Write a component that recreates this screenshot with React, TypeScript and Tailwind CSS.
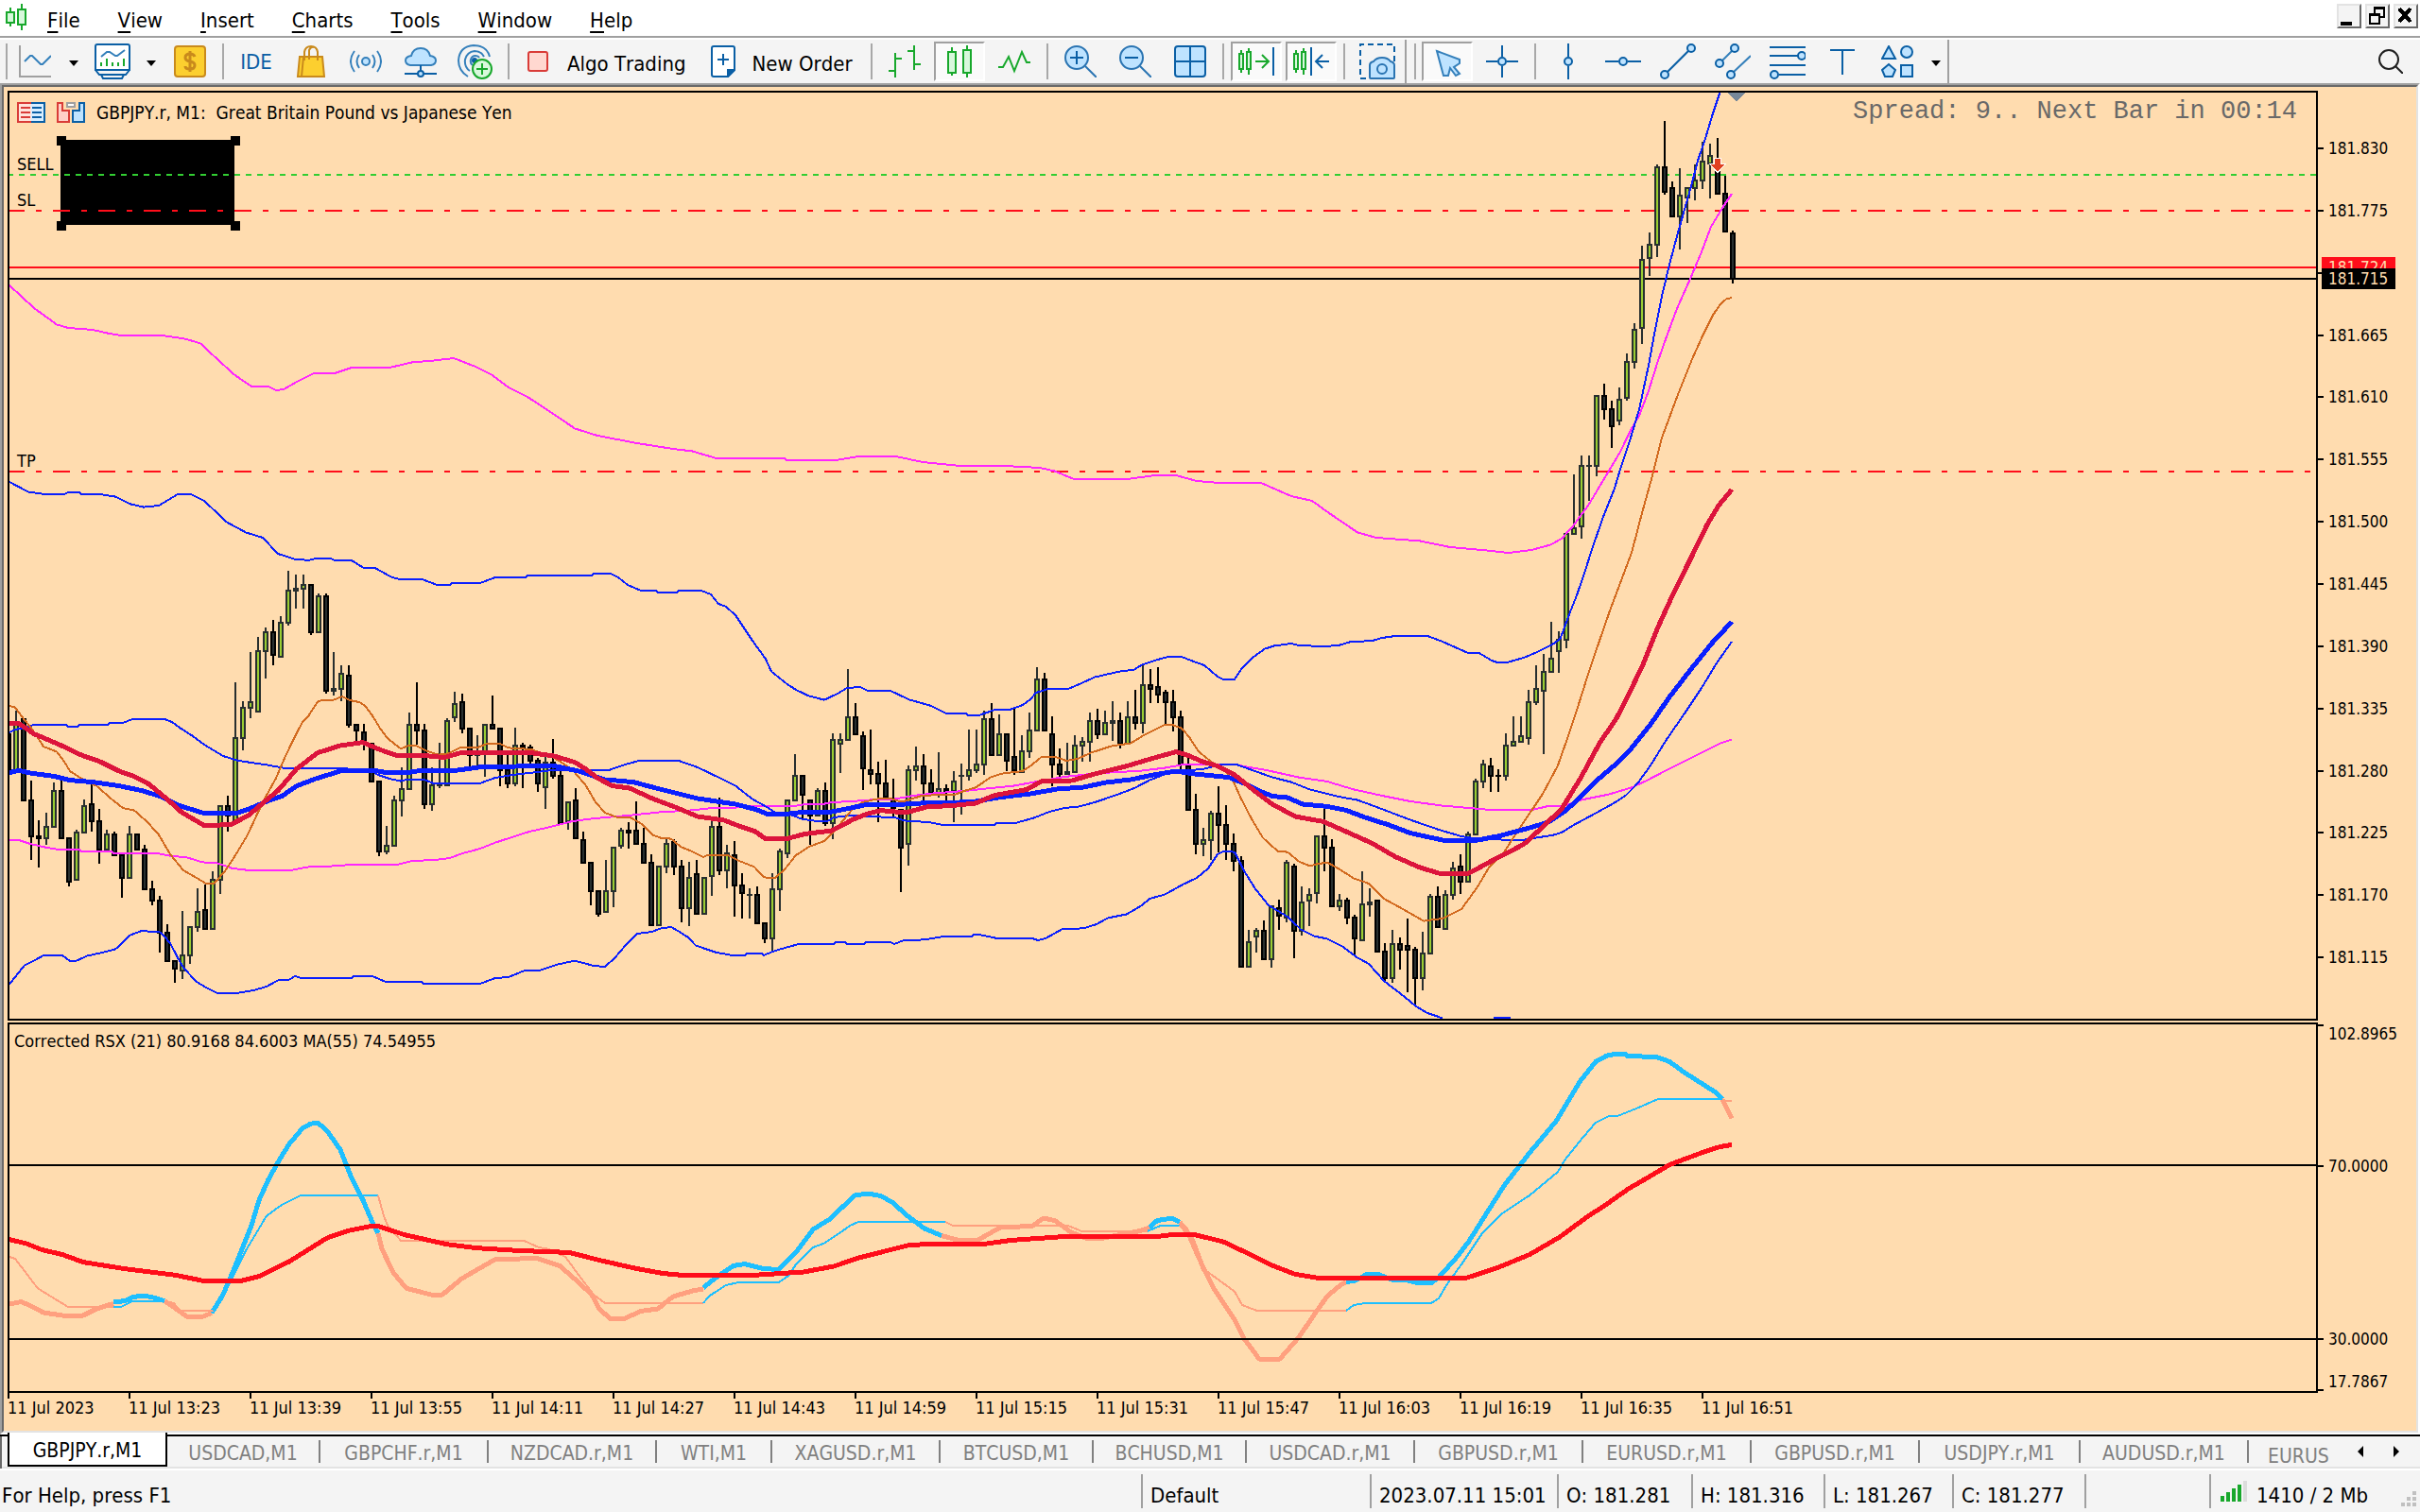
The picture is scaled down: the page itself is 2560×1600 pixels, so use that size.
import type { ReactNode } from 'react';

type Candle = [number, number, number, number, number];

// high, body top, body bottom, low, 1 = bull. Sixths of a row below BASE_ROW.
const BASE_ROW = 280;
const candles: Candle[] = [
  [645, 645, 770, 770, 0], [576, 618, 770, 770, 1], [600, 600, 862, 862, 0], [798, 858, 976, 1050, 0],
  [924, 972, 982, 1074, 0], [900, 942, 983, 1002, 1], [804, 828, 946, 946, 1], [790, 828, 983, 983, 0],
  [978, 978, 1120, 1134, 0], [954, 961, 1115, 1115, 1], [858, 876, 965, 965, 1], [808, 870, 929, 960, 0],
  [888, 924, 1018, 1062, 0], [954, 966, 1018, 1018, 1], [960, 966, 1036, 1036, 0], [1030, 1032, 1108, 1170, 0],
  [942, 966, 1109, 1109, 1], [966, 966, 1018, 1018, 0], [1002, 1014, 1145, 1145, 0], [1116, 1140, 1182, 1194, 0],
  [1164, 1176, 1285, 1344, 0], [1254, 1278, 1373, 1373, 0], [1369, 1369, 1396, 1440, 0], [1212, 1350, 1402, 1428, 1],
  [1260, 1260, 1355, 1380, 1], [1140, 1212, 1266, 1278, 1], [1125, 1206, 1271, 1271, 0], [1086, 1110, 1271, 1271, 1],
  [876, 876, 1114, 1158, 1], [846, 876, 912, 960, 0], [486, 660, 936, 936, 1], [546, 564, 664, 702, 1],
  [390, 546, 570, 600, 1], [342, 384, 580, 580, 1], [312, 324, 388, 474, 1], [288, 324, 402, 432, 0],
  [276, 294, 407, 407, 1], [132, 192, 299, 306, 1], [144, 186, 198, 252, 1], [144, 174, 190, 252, 1],
  [174, 174, 329, 336, 0], [204, 210, 329, 329, 1], [204, 210, 515, 522, 0], [390, 504, 516, 528, 1],
  [432, 456, 509, 546, 1], [432, 462, 624, 630, 0], [618, 618, 641, 672, 0], [618, 642, 682, 702, 0],
  [680, 680, 803, 803, 0], [798, 798, 1025, 1038, 0], [942, 1002, 1025, 1032, 1], [846, 858, 1006, 1006, 1],
  [756, 822, 863, 912, 1], [582, 618, 827, 827, 1], [486, 618, 641, 684, 0], [618, 636, 875, 888, 0],
  [756, 810, 875, 894, 1], [678, 808, 816, 820, 1], [600, 606, 814, 814, 1], [516, 552, 599, 612, 1],
  [522, 546, 635, 648, 0], [630, 630, 719, 756, 0], [654, 706, 719, 750, 1], [618, 618, 707, 786, 1],
  [528, 618, 635, 635, 0], [630, 630, 767, 816, 0], [708, 762, 809, 822, 0], [630, 684, 811, 816, 1],
  [678, 684, 698, 822, 0], [684, 690, 737, 744, 0], [726, 732, 809, 834, 0], [720, 738, 821, 888, 1],
  [666, 738, 785, 792, 0], [765, 780, 936, 936, 0], [864, 864, 932, 954, 1], [822, 858, 983, 983, 0],
  [960, 984, 1061, 1061, 0], [1056, 1056, 1151, 1194, 0], [1146, 1146, 1222, 1230, 0], [1050, 1146, 1217, 1217, 1],
  [1008, 1008, 1151, 1200, 1], [948, 954, 1006, 1014, 1], [930, 954, 965, 1014, 0], [864, 954, 1000, 1000, 0],
  [948, 996, 1061, 1061, 0], [1032, 1056, 1259, 1259, 0], [1068, 1068, 1259, 1259, 1], [984, 996, 1073, 1092, 1],
  [984, 990, 1073, 1098, 0], [1050, 1068, 1205, 1248, 0], [1056, 1104, 1205, 1260, 1], [1050, 1092, 1222, 1222, 0],
  [1104, 1104, 1222, 1222, 1], [920, 942, 1103, 1164, 1], [852, 942, 1085, 1098, 0], [1002, 1026, 1085, 1140, 1],
  [990, 1032, 1133, 1230, 0], [1092, 1128, 1157, 1236, 0], [1140, 1158, 1164, 1236, 1], [1134, 1158, 1253, 1253, 0],
  [1248, 1248, 1301, 1314, 0], [1092, 1140, 1300, 1338, 1], [1014, 1020, 1145, 1212, 1], [858, 858, 1031, 1044, 1],
  [714, 780, 863, 863, 1], [780, 780, 845, 918, 0], [858, 858, 910, 1002, 0], [822, 828, 910, 910, 1],
  [804, 828, 935, 942, 0], [648, 666, 935, 984, 1], [648, 666, 683, 774, 1], [444, 594, 671, 671, 1],
  [552, 594, 653, 653, 0], [642, 654, 761, 828, 0], [636, 762, 779, 810, 0], [738, 774, 809, 930, 0],
  [732, 804, 851, 851, 0], [792, 850, 886, 910, 0], [888, 888, 1013, 1152, 0], [750, 762, 1000, 1068, 1],
  [690, 750, 767, 798, 1], [714, 750, 809, 870, 0], [762, 804, 840, 840, 0], [708, 822, 838, 852, 1],
  [810, 822, 836, 870, 0], [768, 798, 833, 930, 1], [744, 780, 786, 906, 1], [636, 762, 785, 798, 1],
  [636, 744, 767, 774, 1], [576, 600, 749, 780, 1], [552, 600, 719, 719, 0], [588, 648, 719, 719, 1],
  [648, 648, 737, 768, 0], [570, 720, 767, 780, 0], [654, 702, 773, 773, 1], [582, 636, 707, 726, 1],
  [438, 474, 641, 641, 1], [456, 474, 641, 641, 0], [594, 648, 749, 816, 0], [696, 744, 779, 792, 0],
  [678, 768, 779, 780, 1], [654, 684, 773, 773, 1], [660, 672, 689, 738, 1], [582, 606, 677, 738, 1],
  [570, 606, 653, 666, 0], [576, 612, 653, 653, 1], [546, 606, 617, 672, 1], [582, 606, 683, 696, 0],
  [546, 594, 683, 683, 1], [510, 594, 617, 636, 0], [432, 492, 617, 648, 1], [444, 492, 509, 552, 0],
  [438, 498, 527, 552, 0], [510, 516, 551, 618, 0], [510, 546, 599, 642, 0], [576, 594, 750, 762, 0],
  [726, 750, 893, 893, 0], [840, 888, 1001, 1032, 0], [948, 984, 1001, 1038, 1], [894, 900, 989, 1050, 1],
  [816, 900, 941, 1026, 0], [876, 936, 1001, 1050, 0], [966, 996, 1055, 1086, 0], [1038, 1050, 1391, 1391, 0],
  [1272, 1308, 1391, 1391, 1], [1266, 1272, 1295, 1344, 1], [1242, 1272, 1367, 1367, 0], [1194, 1194, 1367, 1392, 1],
  [1176, 1200, 1229, 1272, 0], [1050, 1056, 1235, 1248, 1], [1062, 1068, 1277, 1362, 0], [1134, 1182, 1277, 1290, 1],
  [1140, 1158, 1181, 1260, 1], [972, 972, 1157, 1188, 1], [888, 972, 1013, 1086, 0], [984, 1008, 1199, 1199, 0],
  [1158, 1176, 1199, 1212, 1], [1170, 1176, 1235, 1254, 0], [1224, 1230, 1301, 1356, 0], [1086, 1188, 1307, 1307, 1],
  [1140, 1182, 1194, 1230, 1], [1176, 1176, 1343, 1343, 0], [1314, 1338, 1427, 1434, 0], [1272, 1314, 1427, 1440, 1],
  [1296, 1314, 1337, 1398, 0], [1236, 1320, 1337, 1470, 0], [1326, 1332, 1427, 1512, 0], [1278, 1344, 1427, 1464, 1],
  [1158, 1164, 1349, 1349, 1], [1134, 1164, 1265, 1265, 0], [1146, 1158, 1271, 1271, 1], [1056, 1074, 1163, 1176, 1],
  [1032, 1068, 1121, 1158, 0], [960, 966, 1121, 1121, 1], [792, 798, 971, 971, 1], [732, 744, 803, 822, 1],
  [726, 750, 785, 834, 0], [762, 780, 786, 834, 0], [648, 684, 785, 798, 1], [594, 672, 689, 689, 1],
  [594, 654, 677, 677, 1], [510, 546, 665, 684, 1], [432, 504, 551, 558, 1], [396, 450, 515, 714, 1],
  [294, 408, 455, 455, 1], [324, 348, 389, 456, 1], [12, 12, 353, 378, 1], [-174, -6, 17, 17, 1],
  [-234, -204, -7, 30, 1], [-234, -204, -198, -90, 1], [-426, -426, -199, -168, 1], [-462, -426, -379, -348, 0],
  [-408, -384, -325, -258, 0], [-450, -414, -343, -330, 1], [-558, -534, -415, -408, 1], [-654, -636, -529, -510, 1],
  [-900, -858, -637, -588, 1], [-942, -906, -859, -804, 1], [-1158, -1152, -901, -864, 1], [-1296, -1152, -1069, -1062, 0],
  [-1104, -1086, -991, -990, 0], [-1146, -1062, -991, -888, 1], [-1086, -1086, -1051, -972, 1], [-1158, -1110, -1081, -1044, 1],
  [-1230, -1170, -1105, -1080, 1], [-1224, -1188, -1159, -1050, 1], [-1242, -1160, -1063, -1063, 0], [-1122, -1068, -943, -943, 0],
  [-948, -942, -795, -780, 0],
];

const row = (v: number) => BASE_ROW + Math.round(v / 6);

const magentaUpper =
  '5,151 18,163 30,171.7 36,173.5 49,174.5 57,176.3 64,177.5 86,177.5 98,179.3 106,181.7 114,189.2 124,198.3 133,204.5 142,204.5 146,206.5 150,206 157,202 166,197.5 177,197.5 186,194.5 206,194.5 218,191.7 230,190.7 240,189.5 252,194.2 260,198.3 269,205 279,210 293,219.2 304,226.7 316,230.5 337,234.5 356,237.5 366,238.7 379,242.5 415,242.5 416,243.5 442,243.5 454,241.5 474,241.5 488,244.5 508,246.5 531,246.5 550,247.5 558,249.3 568,253.5 596,253.5 611,251.5 622,251.5 633,254.5 645,255.5 667,255.5 683,262.5 694,265 702,270.8 718,281.7 728,284.5 751,286.2 767,289.5 786,291.2 798,292.5 810,291 820,288.3 826,285 832,278.3 840,267.5 850,250.8 857,239 863,226.7 867,220 872,206.7 877,190.8 882,176.7 887,163.3 894,147.5 900,133.3 905,120 911,110 916,102.5';
const magentaLower =
  '5,444.5 10,444.5 16,446.5 24,448.3 31,449.5 42,449.5 43,450.5 59,450.5 60,451.5 83,451.5 90,452.8 99,453.7 107,456.2 115,456.7 123,459.5 132,460.5 154,460.5 162,458.8 182,458 183,457.5 210,457.5 218,455.5 230,455 238,454 244,451.7 254,449 262,445.8 280,440 290,437.8 302,434.7 310,433.5 318,432.7 332,431.5 351,429.5 363,429 375,427.7 389,427.3 396,426.5 420,426.5 426,425.5 436,425.3 440,424.5 450,424 461,423.2 473,422.8 483,421 494,419.7 510,418.5 524,417 536,415.8 547,413.8 563,411 575,409.7 590,408.5 602,408 616,406.3 626,404.5 654,404.5 659,405.7 669,407.3 687,411.3 702,413.5 716,417.7 732,421.2 746,424 763,426.3 777,427.5 787,428.4 811,428.4 818,426.7 828,426.2 836,423.3 851,420.3 863,416.7 871,413 883,406.7 897,399.7 910,393.3 916,391.3';
const bandUpper =
  '5,255 15,260.3 24,261.5 34,261.5 36,260.5 42,260.5 43,261.5 53,261.5 61,262.8 69,266.7 76,268.3 84,267.5 94,261.5 101,261.5 108,265 120,276.3 130,281.7 139,284.5 147,293 157,296.2 164,296.3 167,295.5 175,295.5 177,296.5 186,296.5 192,300.3 198,300.3 207,305.3 211,306.4 223,306.4 231,309.4 238,309.4 239,308.5 254,308.5 262,305.5 278,305.5 279,304.5 313,304.5 314,303.5 323,303.5 327,305.5 332,309.5 339,312.5 347,312.5 348,313.5 358,313.5 359,312.5 371,312.5 376,314.5 380,319.5 384,321 389,325.5 398,339 405,348.7 408,355.3 416,361.7 421,365 428,368.3 436,370.3 443,367 448,364 455,363.5 459,365.5 471,365.5 481,370.2 492,373.3 500,377.3 511,377.3 512,378.4 518,378.4 524,376.3 526,375.5 534,375.5 541,373 545,370 548,366.5 553,365 554,364.5 565,364.5 572,361.5 579,358.3 592,355.3 600,354.3 604,351.7 614,348.5 618,347.5 625,347.5 630,349.5 637,352 644,358 647,359.5 653,359.5 657,353.3 662,348.3 669,343.3 674,341.7 683,340.5 687,341.5 700,342 708,341.5 714,339.7 726,339 731,337.5 738,336.5 755,336.5 763,339.5 776,345.3 782,345.3 789,349.5 792,350.5 797,350.5 806,348 813,345 821,341 825,338.3 827,333.3 830,325 834,315 838,303.3 842,290.8 848,273.3 854,258.3 857,248.3 862,233.3 867,216.7 872,193.3 875,176.7 879,156.7 883,140 887,125 891,110.8 895,96.7 898,85 902,73.3 906,60 910,48';
const bandMiddle =
  '5,387.5 8,386 13,385 18,383.5 35,383.5 36,384.5 41,384.5 42,383.5 57,383.5 58,382.5 65,382.5 70,380.5 87,380.5 91,382 95,385 102,389.5 108,394 118,400 126,402.5 133,403.5 141,404.7 151,406.5 180,406.5 196,407.5 200,410 206,412 212,413.3 215,412.5 225,412.7 229,414.4 254,414.4 262,411.5 271,410 284,408.5 292,407.5 322,407.5 330,404.7 338,402.5 359,402.5 369,406 379,410.8 389,415.8 398,422.8 405,426.7 410,429.8 419,431.3 424,433.3 432,434.5 438,434.3 441,432.5 449,431.5 459,432 473,432.5 479,434.3 491,435 499,436.5 526,436.5 527,435.5 537,435.5 547,432.7 555,429.5 563,427.5 571,426.7 579,424.5 590,420.8 600,417 608,412.8 616,409.7 622,408 636,407 646,404.5 654,404.5 661,407 673,411.3 683,413.8 693,417.8 708,421.5 718,423.3 726,426.2 736,430 746,433.8 761,439 773,442.5 783,444 805,444.5 814,443 821,442 826,440.5 832,436.7 843,430.8 853,425.3 860,420.8 866,414.7 873,405 881,392 891,377.5 900,364 908,350.8 916,339.5';
const bandLower =
  '5,520.7 9,515.7 13,510.7 18,508.3 23,505.5 33,505.5 37,508.5 40,508.5 46,505.8 54,504 61,502.2 65,498.7 69,494.7 75,492.5 85,493.3 90,499 94,506.7 97,512 104,519.5 109,522.5 115,525.5 125,525.5 134,524 141,522 147,518.7 153,518.3 156,516.5 159,517.4 186,517.4 187,516.5 197,516.5 204,519.5 223,519.5 224,520.5 254,520.5 262,517.5 269,517 277,513.7 286,513.3 295,510.3 304,508.3 314,511 320,511.5 325,507 331,500 337,494 345,493 349,491.3 355,490.5 359,492.8 364,496 368,500.3 379,504 387,505.4 394,505.4 395,504.5 403,504.5 404,505.4 410,503 422,499.6 441,499.5 442,498.5 447,498.5 448,499.5 457,499.5 458,498.5 471,498.5 473,499.5 478,497.5 489,497.2 499,495.5 514,495.5 515,494.5 518,494.5 527,496.4 546,496.5 549,497.5 553,496.5 562,491.5 573,491.2 580,489 586,485.7 596,483.7 604,479 608,475.5 616,473.3 626,467.8 633,464.5 639,459.5 644,452 647,450.5 653,450.8 658,460.8 664,470.3 671,479 681,485 688,491.7 695,495.3 702,496.7 710,500.8 718,506.7 724,510 732,519 742,526.7 749,532.5 755,536 763,538.7';
const fastMa =
  '5,373.5 8,374.3 12,379.7 17,385.8 23,395 30,397.7 34,403 37,408 44,412.5 51,415.8 59,422.8 65,427.5 71,428.8 78,435 84,441.7 90,452 97,460.5 104,464.5 109,467.5 113,467.5 119,461 124,453.3 131,441.7 136,430.8 141,420.8 146,411.7 151,400 156,389.7 160,382 163,379 168,371.3 170,370.5 176,370.5 181,368.5 185,370.5 190,371.5 193,373.3 197,378.7 201,385.3 205,390.7 212,396.2 216,394.5 220,394.5 226,397.5 232,399.3 237,398.7 243,395.7 253,395.4 257,393.7 265,393.7 269,395.7 281,396.5 288,399 293,401 298,404 304,408.7 310,415.8 315,424.5 320,430 326,432.3 333,432.3 340,436.3 345,441.7 350,443.5 355,443.8 360,448 366,450.5 372,453.5 374,452.5 385,452.5 391,455.5 399,458.7 404,464.2 410,464.5 415,460 421,452.5 428,448 436,445 441,440 446,434 451,428 456,424.5 465,422.5 471,422.5 477,424.3 487,421.2 497,420.4 505,420.4 510,418.5 516,416.7 524,411.3 530,409.3 541,408 546,404.5 551,400.4 558,400.4 564,402.5 570,401.5 577,398.3 588,394.7 598,393.3 605,389 616,383.5 620,383.5 625,385.3 629,390 634,397.7 641,403.3 646,405.8 652,412.5 656,421.7 662,433.3 668,443.3 676,450.5 681,450.8 687,455.8 693,458.3 696,457.3 702,456.3 707,459 716,464.7 724,467.5 732,475.5 742,481 753,487.3 763,486 773,481 781,470 788,458.3 795,451.7 802,440.8 810,429 816,420 824,405 829,390.8 834,375.8 840,356.7 846,339 852,321.7 858,305.8 863,292.5 868,273.3 874,251.7 879,231.7 887,210 895,190 901,176.7 906,166.7 910,161 913,158.3 916,157.5';
const slowMa =
  '5,408.8 10,407.7 16,409 29,410.8 37,412.8 49,413.8 63,415.8 75,418.3 86,421.7 94,426 107,430 126,430 133,427.5 141,424 149,421.3 157,415.8 167,412 180,408 197,407.5 204,408.7 216,408.7 222,407.8 240,407.8 253,406 273,405.5 292,405 306,408 320,412.5 335,413.8 347,417 369,422.5 389,425.5 400,428.3 406,430.8 415,430.8 422,430 439,429.7 451,427.3 458,425.8 479,425.5 487,425 504,424.7 516,424 530,421.7 545,420 559,417.5 573,416.5 585,414 598,412.5 610,410 622,408 632,409.5 650,411.3 657,414 667,418.8 673,421.3 681,422 689,425.5 702,426.7 712,428.7 722,432.5 734,436.3 746,440.8 763,444.5 779,445 793,442.3 808,438.3 819,435 828,429 836,421.7 846,411.7 855,404 863,395.8 873,383.3 883,368.8 895,353.3 906,339.7 916,329';
const midMa =
  '5,382.8 10,382.8 18,388.3 31,393.8 43,399.5 53,403 63,408 71,410.8 79,415 88,422.5 96,429.7 108,436.8 122,436.3 131,431.7 139,425 147,418.3 157,406.7 168,398.3 180,394.5 192,392.8 200,396.3 210,399.8 224,399.7 235,400.8 244,398.2 280,398.2 293,400 304,403.3 310,407 316,411.7 324,415.8 333,417 345,422.5 357,427 369,432 383,434 390,436.7 399,439.7 405,443.8 416,443.8 426,441.2 440,439.5 451,433.7 459,430.5 466,428.8 479,430 490,427 504,426.2 516,425 526,420.8 543,417.8 551,413.3 567,413 579,409.5 596,405.3 608,401.7 622,397.8 628,399.5 636,403 644,405.3 653,410 663,418 673,425.5 685,432 700,434.7 712,440 726,446.3 738,453.3 751,459 761,462 777,462 789,455.5 806,446.7 816,437.5 826,428 836,411.7 846,393.3 855,380 861,368.3 869,351.7 877,331.7 885,314.2 895,294 903,277.5 909,267.5 916,259';

const UP = '#1ebfff';
const DOWN = '#ffa07f';

const rsx: [string, string][] = [
  [DOWN, '5,690 11,688.8 16,690.8 23,694.5 33,696 44,696 51,692.5 60,689.7'],
  [UP, '60,689 66,688.3 70,686.3 76,685.5 82,686.7 87,688.3'],
  [DOWN, '87,688.3 92,691.7 99,696.7 107,696.7 112,694.7'],
  [UP, '112,694.7 118,685 123,673.3 129,658.3 133,648.3 137,635 142,624 148,613.3 153,605.3 160,597 164,594.7 168,594 173,598.3 180,608.3 186,623.3 192,635 197,646.7 200,652.5'],
  [DOWN, '200,652.5 202,660.8 208,673.3 215,681.7 228,685 234,685 244,676.7 252,672 262,666.3 284,665.8 296,669.7 304,676.7 313,685 317,692.5 323,698 330,697.8 339,693.7 348,692.5 356,686 367,682.8 372,682'],
  [UP, '372,681.3 380,675 388,669.7 394,668.8 404,671.3 412,671.7 421,662.5 430,650.5 439,645 452,632.5 459,631.5 466,632.8 472,636.2 480,643.3 489,650 498,653.8'],
  [DOWN, '498,653.8 507,656.2 517,656.2 529,649.5 546,648.7 552,644.5 558,645.8 566,651.7 574,655 584,655 592,653.3 603,651.3 608,649.5'],
  [UP, '608,649.5 612,645.8 620,644.5 624,646.7'],
  [DOWN, '624,646.7 627,650 631,656.7 636,670 642,681.7 653,698.3 658,708.3 666,719 677,719 687,707.5 695,695.8 702,685.8 709,680 712,678.3'],
  [UP, '712,678.3 717,677.5 723,674.2 729,674.2 736,677 744,677.3 750,678.8 757,678.8 761,675.8 770,665.8 777,656.7 787,640.8 796,626.7 809,610 823,593.3 836,571.7 844,561.7 850,558.5 854,557.8 860,557.8 861,558.8 876,559.2 883,561.7 891,567.5 902,574.5 908,578.3 911,581.7'],
  [DOWN, '911,581.7 916,591.7'],
];

const rsxSignal: [string, string][] = [
  [DOWN, '5,665 8,666 20,681.7 36,691.5 60,691.5'],
  [UP, '60,691.5 64,691.5 66,690.5 70,688.4 87,688.4'],
  [DOWN, '87,688.4 92,689.5 95,693.4 113,693.4'],
  [UP, '113,693.4 116,688 123,675.8 130,661.7 137,650 141,643.3 149,637.5 159,632.5 200,632.5'],
  [DOWN, '200,632.5 203,643.3 205,648.3 212,656.4 277,656.4 285,660 290,660.8 299,665 307,675.8 314,685 320,689.5 372,689.5'],
  [UP, '372,689.5 375,685.8 384,680 391,678.4 412,678.4 417,675 421,669 430,660 436,657.8 450,648.3 454,646.5 500,646.5'],
  [DOWN, '500,646.5 504,648.5 565,648.5 572,651.4 607,651.4'],
  [UP, '607,651.4 614,648.4 624,648.4'],
  [DOWN, '624,648.4 628,653.3 633,665 637,671.7 653,683.3 657,690.5 665,693.5 712,693.5'],
  [UP, '712,693.5 716,690.5 722,689.5 757,689.5 761,687 765,680 773,669 784,652.5 795,641.7 809,632.5 824,620 828,613.3 836,603.3 844,594 851,590.5 856,590.3 866,586.3 877,581.5 911,581.5'],
  [DOWN, '911,581.5 913,582.5 916,582.5'],
];

const rsxMa =
  '5,655.8 14,658 22,661.2 33,663.8 44,667.8 66,671.3 93,674.7 108,677.8 127,677.8 137,675.3 153,667.5 173,655 184,651.2 196,648.8 200,648.8 214,653.3 236,658.3 252,660.3 274,661.7 301,662.7 318,667 337,671.3 351,673.8 362,674.8 397,674.8 425,673 441,670 455,665.3 480,659 493,658 522,658 535,656.2 567,654 614,654 622,653 632,653.3 647,657 658,662.2 672,669.2 685,674.2 696,676 776,676 792,670.8 809,663.8 825,654.5 839,644.2 850,637 861,629.2 872,622.8 883,616.3 902,609.2 910,606.7 916,605.7';

// The third row is covered by the bid and ask tags, so only its tick shows.
const prices = [
  '181.830', '181.775', '', '181.665', '181.610', '181.555', '181.500',
  '181.445', '181.390', '181.335', '181.280', '181.225', '181.170', '181.115',
];

const times = [
  '11 Jul 2023', '11 Jul 13:23', '11 Jul 13:39', '11 Jul 13:55', '11 Jul 14:11', '11 Jul 14:27',
  '11 Jul 14:43', '11 Jul 14:59', '11 Jul 15:15', '11 Jul 15:31', '11 Jul 15:47', '11 Jul 16:03',
  '11 Jul 16:19', '11 Jul 16:35', '11 Jul 16:51',
];

const tabs = [
  { name: 'USDCAD,M1', width: 'w-[162px]' },
  { name: 'GBPCHF.r,M1', width: 'w-[178px]' },
  { name: 'NZDCAD.r,M1', width: 'w-[178px]' },
  { name: 'WTI,M1', width: 'w-[122px]' },
  { name: 'XAGUSD.r,M1', width: 'w-[178px]' },
  { name: 'BTCUSD,M1', width: 'w-[162px]' },
  { name: 'BCHUSD,M1', width: 'w-[162px]' },
  { name: 'USDCAD.r,M1', width: 'w-[178px]' },
  { name: 'GBPUSD.r,M1', width: 'w-[178px]' },
  { name: 'EURUSD.r,M1', width: 'w-[178px]' },
  { name: 'GBPUSD.r,M1', width: 'w-[178px]' },
  { name: 'USDJPY.r,M1', width: 'w-[170px]' },
  { name: 'AUDUSD.r,M1', width: 'w-[178px]' },
];

const BLUE = '#0a5fa5';
const SKY = '#bee3ff';
const GREEN = '#18a82c';
const MINT = '#d8f8dc';

// ---- toolbar pieces ----

const Icon = ({ children, size = 'size-[34px]', box = '0 0 34 34' }: { children: ReactNode; size?: string; box?: string }) => (
  <svg viewBox={box} className={size} fill="none" stroke={BLUE} strokeWidth="2" aria-hidden="true">
    {children}
  </svg>
);

const Tool = ({ label, active, children }: { label: string; active?: boolean; children: ReactNode }) => (
  <div className="flex w-[58px] shrink-0 items-center justify-center">
    <button
      type="button"
      aria-label={label}
      className={
        active
          ? 'flex h-[42px] w-[54px] items-center justify-center border-2 border-t-[#a0a0a0] border-l-[#a0a0a0] border-r-white border-b-white bg-[#fafafa]'
          : 'flex h-[42px] w-[54px] items-center justify-center'
      }
    >
      {children}
    </button>
  </div>
);

const Sep = () => (
  <div className="flex w-3 shrink-0 items-center justify-center">
    <div className="h-[38px] w-[2px] bg-[#a8a8a8]" />
  </div>
);

const Caret = ({ label }: { label: string }) => (
  <button type="button" aria-label={label} className="flex w-6 shrink-0 items-center justify-center">
    <svg viewBox="0 0 10 6" className="mt-1 h-[6px] w-[10px]" aria-hidden="true">
      <path d="M0 0h10L5 6z" />
    </svg>
  </button>
);

const Toolbar = () => (
  <div role="toolbar" aria-label="Standard" className="flex h-12 shrink-0 items-stretch border-t-2 border-white bg-[#f4f4f4]">
    <div className="flex w-2 items-center justify-end">
      <div className="h-[38px] w-[2px] bg-[#a8a8a8]" />
    </div>
    <Tool label="Line studies">
      <Icon>
        <path d="M1 0v33h33" stroke="#a0a0a0" />
        <path d="M6 17l6-6h2l9 9h2l9-9" stroke="#3580bb" />
      </Icon>
    </Tool>
    <Caret label="More line studies" />
    <Tool label="Templates">
      <Icon size="size-[38px]" box="0 0 38 38">
        <path d="M1 28V3q0-2 2-2h32q2 0 2 2v25z" fill="#fff" />
        <path d="M7 14l6-5h3l6 4h2l8-6" stroke="#3580bb" />
        <path d="M7 24v-4M13 24v-8M19 24v-4M25 24v-4M31 24v-8" stroke={GREEN} />
        <path d="M1 28l4 5h28l4-5M7 33l2 4h20l2-4" />
      </Icon>
    </Tool>
    <Caret label="More templates" />
    <Tool label="Quotes">
      <Icon>
        <rect x="1" y="1" width="32" height="32" rx="3" fill="#fccf2f" stroke="#c98a1c" />
        <path d="M22 12q-1-3-5-3-5 0-5 4 0 3 5 4t5 4q0 4-5 4t-5-3M17 6v22" stroke="#c98a1c" strokeWidth="3" />
      </Icon>
    </Tool>
    <Sep />
    <Tool label="MetaEditor">
      <span className="text-[22px] text-[#0a5fa5]">IDE</span>
    </Tool>
    <Tool label="Market">
      <Icon>
        <path d="M5 12h24l2 21H3z" fill="#fccf2f" stroke="#c98a1c" />
        <path d="M9 12L7 33M10 16V7q1-6 7-6t7 6v9M15 15V5q2-4 5-3" stroke="#c98a1c" />
      </Icon>
    </Tool>
    <Tool label="Signals">
      <Icon>
        <circle cx="17" cy="17" r="4" fill={SKY} stroke="#3580bb" />
        <path d="M10 10q-5 7 0 14M24 10q5 7 0 14M5 6q-8 11 0 22M29 6q8 11 0 22" stroke="#3580bb" />
      </Icon>
    </Tool>
    <Tool label="Virtual hosting">
      <Icon>
        <path d="M6 21q-5-1-5-5t6-5q2-8 10-8t10 8q6 1 6 5t-5 5z" fill={SKY} stroke="#3580bb" />
        <path d="M17 21v6M0 30h14M20 30h14" />
        <circle cx="17" cy="30" r="3" fill={SKY} />
      </Icon>
    </Tool>
    <Tool label="Web request">
      <Icon size="size-[38px]" box="0 0 38 38">
        <path d="M11 35Q1 29 1 18 2 3 17 2q14 0 17 12M13 29q-6-4-5-12 2-8 10-9 7 0 10 6M16 23q-3-2-2-6 1-4 5-4 3 0 4 2" stroke="#3580bb" />
        <circle cx="18" cy="18" r="3" fill={BLUE} stroke="none" />
        <circle cx="26" cy="27" r="10" fill={MINT} stroke={GREEN} />
        <path d="M26 21v12M20 27h12" stroke={GREEN} />
      </Icon>
    </Tool>
    <Sep />
    <button type="button" className="flex shrink-0 items-center gap-5 pr-[14px] pl-[14px] text-[22px]">
      <Icon size="size-[22px]" box="0 0 22 22">
        <rect x="1" y="1" width="20" height="20" rx="2" fill="#ffd8d0" stroke="#d93c38" />
      </Icon>
      <span className="pt-1">Algo Trading</span>
    </button>
    <button type="button" className="flex shrink-0 items-center gap-[18px] pr-[14px] pl-3 text-[22px]">
      <Icon size="h-[34px] w-[26px]" box="0 0 26 34">
        <path d="M3 1h20q2 0 2 2v23l-7 7H3q-2 0-2-2V3q0-2 2-2z" fill="#fff" />
        <path d="M25 26h-7v7z" fill={BLUE} />
        <path d="M13 9v12M7 15h12" />
      </Icon>
      <span className="pt-1">New Order</span>
    </button>
    <Sep />
    <Tool label="Bar chart">
      <Icon>
        <path d="M7 8v26M7 14h7M0 27h7M27 0v26M20 6h7M27 20h7" stroke={GREEN} />
      </Icon>
    </Tool>
    <Tool label="Candlesticks" active>
      <Icon>
        <path d="M9 2v30M25 0v34" stroke={GREEN} />
        <rect x="5" y="7" width="8" height="22" fill={MINT} stroke={GREEN} />
        <rect x="21" y="5" width="8" height="24" fill={MINT} stroke={GREEN} />
      </Icon>
    </Tool>
    <Tool label="Line chart">
      <Icon>
        <path d="M0 23h5l6-11 6 15 8-20 5 11h4" stroke={GREEN} />
      </Icon>
    </Tool>
    <Sep />
    <Tool label="Zoom in">
      <Icon>
        <circle cx="13" cy="13" r="12" fill={SKY} stroke="#2a74b2" />
        <path d="M22 22l12 12" stroke="#2a74b2" />
        <path d="M13 6v14M6 13h14" />
      </Icon>
    </Tool>
    <Tool label="Zoom out">
      <Icon>
        <circle cx="13" cy="13" r="12" fill={SKY} stroke="#2a74b2" />
        <path d="M22 22l12 12" stroke="#2a74b2" />
        <path d="M6 13h14" />
      </Icon>
    </Tool>
    <Tool label="Tile windows">
      <Icon>
        <rect x="1" y="1" width="32" height="32" rx="3" fill={SKY} />
        <path d="M17 1v32M1 17h32" />
      </Icon>
    </Tool>
    <Sep />
    <Tool label="Auto scroll" active>
      <Icon size="h-[34px] w-[38px]" box="0 0 38 34">
        <path d="M3 5v24M11 3v28" stroke={GREEN} />
        <rect x="1" y="9" width="4" height="16" fill={MINT} stroke={GREEN} />
        <rect x="9" y="7" width="4" height="18" fill={MINT} stroke={GREEN} />
        <path d="M18 17h13M25 10l7 7-7 7" stroke={GREEN} />
        <path d="M37 2v30" />
      </Icon>
    </Tool>
    <Tool label="Chart shift" active>
      <Icon size="h-[34px] w-[38px]" box="0 0 38 34">
        <path d="M3 5v24M11 3v28" stroke={GREEN} />
        <rect x="1" y="9" width="4" height="16" fill={MINT} stroke={GREEN} />
        <rect x="9" y="7" width="4" height="18" fill={MINT} stroke={GREEN} />
        <path d="M19 2v30M24 17h14M31 10l-7 7 7 7" />
      </Icon>
    </Tool>
    <Sep />
    <Tool label="Screenshot">
      <Icon size="size-[38px]" box="0 0 38 38">
        <path d="M7 37H1V1h36v20" strokeDasharray="6 4" />
        <path d="M11 36V23q0-3 4-4 3-4 9-4t9 4q4 1 4 4v13q0 1-1 1H12q-1 0-1-1z" fill={SKY} stroke="#2a74b2" />
        <circle cx="24" cy="27" r="5" fill={SKY} stroke="#2a74b2" />
      </Icon>
    </Tool>
    <div className="flex w-4 items-center justify-between">
      <div className="h-full w-[2px] bg-[#a0a0a0]" />
      <div className="mr-1 h-[38px] w-[2px] bg-[#a8a8a8]" />
    </div>
    <Tool label="Cursor" active>
      <Icon>
        <path d="M6 6l24 9v4l-6 4 6 7-4 2-6-8-2 8h-5z" fill={SKY} stroke="#3580bb" />
      </Icon>
    </Tool>
    <Tool label="Crosshair">
      <Icon>
        <path d="M17 0v12M17 22v12M0 17h12M22 17h12" />
        <circle cx="17" cy="17" r="4" fill={SKY} />
      </Icon>
    </Tool>
    <Sep />
    <Tool label="Vertical line">
      <Icon size="size-[38px]" box="0 0 38 38">
        <path d="M19 0v14M19 24v14" />
        <circle cx="19" cy="19" r="4" fill={SKY} />
      </Icon>
    </Tool>
    <Tool label="Horizontal line">
      <Icon size="size-[38px]" box="0 0 38 38">
        <path d="M0 19h14M24 19h14" />
        <circle cx="19" cy="19" r="4" fill={SKY} />
      </Icon>
    </Tool>
    <Tool label="Trendline">
      <Icon size="size-[38px]" box="0 0 38 38">
        <path d="M8 30L30 8" />
        <circle cx="33" cy="5" r="4" fill={SKY} />
        <circle cx="5" cy="33" r="4" fill={SKY} />
      </Icon>
    </Tool>
    <Tool label="Channel">
      <Icon size="size-[38px]" box="0 0 38 38">
        <path d="M8 18L18 8M20 30l18-17" stroke="#3580bb" />
        <circle cx="21" cy="5" r="4" fill={SKY} />
        <circle cx="5" cy="21" r="4" fill={SKY} />
        <circle cx="17" cy="33" r="4" fill={SKY} />
      </Icon>
    </Tool>
    <Tool label="Fibonacci">
      <Icon size="size-[38px]" box="0 0 38 38">
        <path d="M0 4h38M0 13h30M0 23h38M10 33h28" />
        <circle cx="34" cy="13" r="4" fill={SKY} />
        <circle cx="5" cy="33" r="4" fill={SKY} />
      </Icon>
    </Tool>
    <Tool label="Text">
      <Icon>
        <path d="M4 5h26M17 5v26" />
      </Icon>
    </Tool>
    <Tool label="Shapes">
      <Icon>
        <path d="M8 1l7 13H1z" fill={SKY} />
        <circle cx="27" cy="7" r="6" fill={SKY} />
        <path d="M8 20l7 6-3 7H4l-3-7z" fill={SKY} />
        <rect x="21" y="21" width="12" height="12" fill={SKY} />
      </Icon>
    </Tool>
    <Caret label="More shapes" />
    <div className="h-full w-[2px] bg-[#a0a0a0]" />
    <button type="button" aria-label="Search" className="mr-[18px] ml-auto">
      <Icon size="size-[26px]" box="0 0 26 26">
        <circle cx="11" cy="11" r="10" stroke="#202020" />
        <path d="M18 18l8 8" stroke="#202020" />
      </Icon>
    </button>
  </div>
);

const WinButton = ({ label, children }: { label: string; children: ReactNode }) => (
  <button
    type="button"
    aria-label={label}
    className="h-[26px] w-[26px] border-2 border-t-[#e3e3e3] border-l-[#e3e3e3] border-r-[#696969] border-b-[#696969] bg-[#f4f4f4]"
  >
    <svg viewBox="0 0 22 22" className="size-[22px]" fill="none" stroke="#000" strokeWidth="2" shapeRendering="crispEdges" aria-hidden="true">
      {children}
    </svg>
  </button>
);

const MenuBar = () => (
  <header className="flex h-10 shrink-0 items-start border-b-2 border-[#a0a0a0] bg-white">
    <svg viewBox="0 0 26 30" className="mt-1 ml-1 h-[30px] w-[26px]" fill={MINT} stroke={GREEN} strokeWidth="2" aria-hidden="true">
      <path d="M7 4v20M19 0v28" />
      <rect x="3" y="9" width="8" height="11" />
      <rect x="15" y="6" width="8" height="16" />
    </svg>
    <nav className="flex pt-2">
      {['File', 'View', 'Insert', 'Charts', 'Tools', 'Window', 'Help'].map((item) => (
        <button key={item} type="button" className="h-7 px-5 text-[22px] leading-7">
          <span className="underline underline-offset-4">{item[0]}</span>
          {item.slice(1)}
        </button>
      ))}
    </nav>
    <div className="mt-1 mr-[2px] ml-auto flex gap-1">
      <WinButton label="Minimize">
        <path d="M2 19h12" strokeWidth="4" />
      </WinButton>
      <WinButton label="Restore">
        <path d="M8 8V2h10v10h-4M8 3h10" />
        <path d="M3 9h10v10H3zM3 10h10" />
      </WinButton>
      <WinButton label="Close">
        <path d="M4 3l12 14M16 3L4 17" strokeWidth="4" />
      </WinButton>
    </div>
  </header>
);

// ---- chart ----

const PriceChart = () => (
  <svg
    viewBox="5 49 1220 490"
    preserveAspectRatio="none"
    className="block h-full w-full"
    shapeRendering="crispEdges"
    fill="none"
    role="img"
    aria-label="GBPJPY one minute candles"
  >
    <g fill="#000">
      <rect x="32" y="74" width="92" height="45" />
      <rect x="30" y="72" width="5" height="5" />
      <rect x="122" y="72" width="5" height="5" />
      <rect x="30" y="117" width="5" height="5" />
      <rect x="122" y="117" width="5" height="5" />
    </g>
    <path d="M4 92.5H1225" stroke="#32cd32" strokeDasharray="3 3" />
    <path d="M4 111.5H1225M4 249.5H1225" stroke="#ff0d1a" strokeDasharray="9 6 3 6" />
    <path d="M4 141.5H1225" stroke="#ff0d1a" />
    <path d="M4 147.5H1225" stroke="#000" />
    {candles.map(([high, top, bottom, low, bull], i) => {
      const x = 4 + i * 4;
      const t = row(top);
      const b = row(bottom);
      return (
        <g key={i} fill={bull ? '#282f2f' : '#000'}>
          <rect x={x} y={row(high)} width="1" height={row(low) - row(high)} />
          <rect x={x - 1} y={t} width="3" height={Math.max(1, b - t)} />
          {b - t > 2 && <rect x={x} y={t + 1} width="1" height={b - t - 2} fill={bull ? '#9acd32' : '#282f2f'} />}
        </g>
      );
    })}
    <g strokeWidth="1">
      <polyline points={magentaUpper} stroke="#ff26ff" />
      <polyline points={magentaLower} stroke="#ff26ff" />
      <polyline points={bandUpper} stroke="#0a1fff" />
      <polyline points={bandMiddle} stroke="#0a1fff" />
      <polyline points={bandLower} stroke="#0a1fff" />
      <path d="M790 538.5h9" stroke="#0a1fff" />
      <polyline points={fastMa} stroke="#d2691e" />
    </g>
    <g strokeWidth="2.5" strokeLinejoin="round">
      <polyline points={slowMa} stroke="#0a1fff" />
      <polyline points={midMa} stroke="#dc143c" />
    </g>
    <path d="M914 49h9l-4.500 5z" fill="#778899" />
    <path d="M907 84h3v3h2l-3.500 4-3.500-4h2z" fill="#e04020" stroke="#fff" strokeWidth="1" paintOrder="stroke" />
  </svg>
);

const RsxChart = () => (
  <svg
    viewBox="5 542 1220 194"
    preserveAspectRatio="none"
    className="block h-full w-full"
    shapeRendering="crispEdges"
    fill="none"
    role="img"
    aria-label="Corrected RSX"
  >
    <g strokeWidth="2.5" strokeLinejoin="round">
      {rsx.map(([color, points], i) => (
        <polyline key={i} points={points} stroke={color} />
      ))}
    </g>
    {rsxSignal.map(([color, points], i) => (
      <polyline key={i} points={points} stroke={color} />
    ))}
    <path d="M5 616.5H1225M5 708.5H1225" stroke="#000" />
    <polyline points={rsxMa} stroke="#ff0d1a" strokeWidth="2.5" strokeLinejoin="round" />
  </svg>
);

const tickAlign = {
  top: 'self-start',
  middle: 'self-center',
  bottom: 'self-end',
};

const AxisLabel = ({ tick = 'middle', children }: { tick?: keyof typeof tickAlign; children: ReactNode }) => (
  <div className="flex h-5 items-center">
    <span className={`mr-[5px] h-[2px] w-[6px] bg-black ${tickAlign[tick]}`} />
    {children}
  </div>
);

const Chart = () => (
  <main className="flex min-h-0 flex-1 border-2 border-t-[#a0a0a0] border-l-[#a0a0a0] border-r-white border-b-white">
    <div className="flex min-w-0 flex-1 flex-col border-2 border-t-[#696969] border-r-[#e3e3e3] border-b-[#e3e3e3] border-l-[#696969] bg-[#ffdcaf] pt-1 pl-1 text-[18px] leading-5">
      <section className="flex min-h-0 flex-[984]">
        <div className="relative min-w-0 flex-1 border-2 border-black">
          <PriceChart />
          <div className="absolute top-[10px] left-2 flex items-center">
            <svg viewBox="0 0 30 22" className="h-[22px] w-[30px]" fill="none" strokeWidth="2" aria-hidden="true">
              <path d="M15 1H1v20h14" stroke="#d93c38" fill="#ffe4dc" />
              <path d="M4 6h10M4 11h10M4 16h10" stroke="#d93c38" />
              <path d="M15 1h14v20H15" stroke={BLUE} fill="#d8eeff" />
              <path d="M16 6h10M16 11h10M16 16h10" stroke={BLUE} />
            </svg>
            <svg viewBox="0 0 30 22" className="ml-3 h-[22px] w-[30px]" fill="none" strokeWidth="2" aria-hidden="true">
              <path d="M1 1h5v8h7v12H1z" stroke="#d93c38" fill="#ffd0c8" />
              <path d="M29 1h-5v8h-7v12h12z" stroke={BLUE} fill={SKY} />
              <path d="M11 1h8v4h-8z" stroke="#a0a0a0" fill="#fff" />
            </svg>
            <h1 className="ml-3 text-[19px] whitespace-pre">GBPJPY.r, M1:  Great Britain Pound vs Japanese Yen</h1>
          </div>
          <span className="absolute top-[66px] left-2">SELL</span>
          <span className="absolute top-[104px] left-2">SL</span>
          <span className="absolute top-[380px] left-2">TP</span>
          <p className="absolute top-1 right-5 font-['Liberation_Mono',monospace] text-[27px] leading-8 text-[#696969]">
            Spread: 9.. Next Bar in 00:14
          </p>
        </div>
        <div className="relative flex w-[104px] shrink-0 flex-col pt-7 pb-[34px] text-[17px]">
          {prices.map((price, i) => (
            <div key={i} className="flex flex-1 items-center">
              <AxisLabel>{price}</AxisLabel>
            </div>
          ))}
          <div className="absolute top-[176px] left-1 w-[78px] text-[#ffdcaf]">
            <div className="h-3 overflow-hidden bg-[#ff0d1a] pl-[7px] leading-[22px]">181.724</div>
            <div className="bg-black pl-[7px] leading-[22px]">181.715</div>
          </div>
        </div>
      </section>
      <section className="mt-[2px] flex min-h-0 flex-[392]">
        <div className="relative min-w-0 flex-1 border-2 border-black">
          <RsxChart />
          <h2 className="absolute top-2 left-[5px]">Corrected RSX (21) 80.9168 84.6003 MA(55) 74.54955</h2>
        </div>
        <div className="flex w-[104px] shrink-0 flex-col pt-[2px] pb-[2px] text-[17px]">
          <AxisLabel tick="top">102.8965</AxisLabel>
          <div className="grow-[120]" />
          <AxisLabel>70.0000</AxisLabel>
          <div className="grow-[164]" />
          <AxisLabel>30.0000</AxisLabel>
          <div className="grow-[25]" />
          <AxisLabel tick="bottom">17.7867</AxisLabel>
        </div>
      </section>
      <div className="flex h-10 shrink-0 overflow-hidden">
        {times.map((time) => (
          <div key={time} className="w-32 shrink-0 whitespace-nowrap">
            <div className="h-[6px] w-[2px] bg-black" />
            <div>{time}</div>
          </div>
        ))}
      </div>
    </div>
  </main>
);

const ChartTabs = () => (
  <nav aria-label="Open charts" className="flex h-9 shrink-0 items-start border-t-2 border-b-2 border-t-black border-b-[#e3e3e3] bg-[#f4f4f4] text-[21px] text-[#808080]">
    <div className="h-[34px] w-2 shrink-0 border-l-2 border-[#696969]" />
    <button
      type="button"
      className="z-10 -mt-1 h-9 w-[169px] shrink-0 border-r-2 border-b-2 border-l-2 border-black bg-white pt-1 text-black"
    >
      GBPJPY.r,M1
    </button>
    {tabs.map((tab, i) => (
      <div key={i} className={`flex h-8 shrink-0 items-center ${tab.width}`}>
        <button type="button" className="flex-1 pt-[6px]">
          {tab.name}
        </button>
        <span className="h-6 w-[2px] bg-[#808080]" />
      </div>
    ))}
    <button type="button" className="h-8 w-[88px] shrink-0 overflow-hidden pt-[6px] pl-5 text-left">
      EURUS
    </button>
    <div className="ml-auto flex h-8 items-center gap-8 pr-[22px]">
      <button type="button" aria-label="Scroll left">
        <svg viewBox="0 0 6 12" className="h-3 w-[6px]" aria-hidden="true">
          <path d="M6 0v12L0 6z" />
        </svg>
      </button>
      <button type="button" aria-label="Scroll right">
        <svg viewBox="0 0 6 12" className="h-3 w-[6px]" aria-hidden="true">
          <path d="M0 0v12l6-6z" />
        </svg>
      </button>
    </div>
  </nav>
);

const Cell = ({ width, children }: { width: string; children?: ReactNode }) => (
  <div className={`h-9 shrink-0 border-l-2 border-[#a0a0a0] pl-2 leading-[46px] ${width}`}>{children}</div>
);

const StatusBar = () => (
  <footer className="flex h-[46px] shrink-0 items-center border-t-2 border-white bg-[#f4f4f4] text-[22px] whitespace-nowrap">
    <div className="h-9 flex-1 pl-[2px] leading-[46px]">For Help, press F1</div>
    <Cell width="w-[242px]">Default</Cell>
    <Cell width="w-[198px]">2023.07.11 15:01</Cell>
    <Cell width="w-[142px]">O: 181.281</Cell>
    <Cell width="w-[140px]">H: 181.316</Cell>
    <Cell width="w-[136px]">L: 181.267</Cell>
    <Cell width="w-[140px]">C: 181.277</Cell>
    <Cell width="w-[132px]" />
    <div className="flex h-9 w-[223px] shrink-0 items-center border-l-2 border-[#a0a0a0] pl-[10px]">
      <svg viewBox="0 0 28 22" className="h-[22px] w-7" strokeWidth="4" stroke={GREEN} aria-hidden="true">
        <path d="M2 22v-6M8 22V12M14 22V8M20 22V4" />
        <path d="M26 22V0" stroke="#dcdcdc" />
      </svg>
      <span className="self-start pl-[10px] leading-[46px]">1410 / 2 Mb</span>
      <svg viewBox="0 0 18 18" className="mr-[2px] ml-auto size-[18px] self-end" fill="#c0c0c0" aria-hidden="true">
        <path d="M12 0h4v4h-4zM6 6h4v4H6zM12 6h4v4h-4zM0 12h4v4H0zM6 12h4v4H6zM12 12h4v4h-4z" />
      </svg>
    </div>
  </footer>
);

export default function App() {
  return (
    <div className="flex h-screen flex-col overflow-hidden bg-[#f4f4f4] font-['DejaVu_Sans_Condensed','DejaVu_Sans',sans-serif] text-[21px] text-black [font-kerning:none]">
      <MenuBar />
      <Toolbar />
      <Chart />
      <ChartTabs />
      <StatusBar />
    </div>
  );
}
